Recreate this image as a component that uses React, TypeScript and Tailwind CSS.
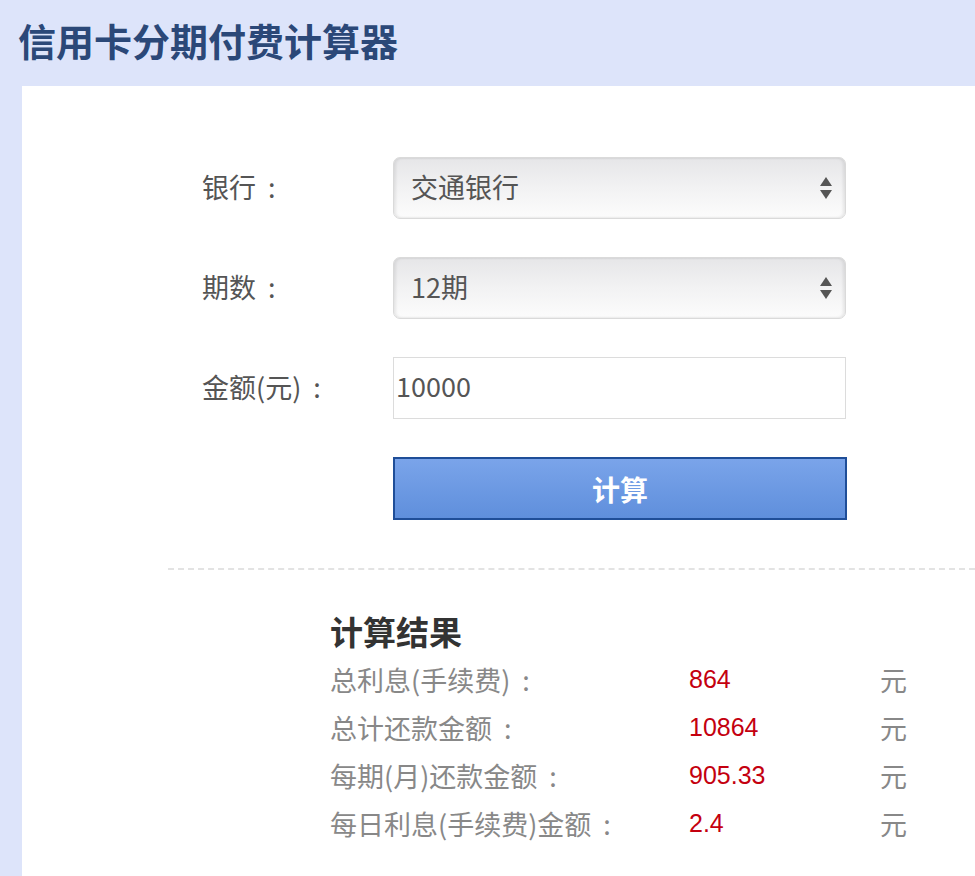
import React from 'react'

const font = { fontFamily: '"Liberation Sans", "Noto Sans CJK SC", sans-serif' }
const cjk = { fontFamily: '"Noto Sans CJK SC", "Liberation Sans", sans-serif' }

const results = [
  { label: '总利息(手续费)', value: '864' },
  { label: '总计还款金额', value: '10864' },
  { label: '每期(月)还款金额', value: '905.33' },
  { label: '每日利息(手续费)金额', value: '2.4' },
]

function Arrows() {
  return (
    <svg width="14" height="26" viewBox="0 0 14 26" className="shrink-0">
      <path d="M7 2 L13 11 L1 11 Z" fill="#555" />
      <path d="M1 15 L13 15 L7 24 Z" fill="#555" />
    </svg>
  )
}

function FakeSelect({ value }: { value: string }) {
  return (
    <div className="w-[453px] h-[62px] flex items-center justify-between pl-[17px] pr-[12px] rounded-[7px] border border-[#dadada] bg-gradient-to-b from-[#e6e6e8] via-[#f2f2f3] to-[#fcfcfc] shadow-[inset_2px_0_3px_rgba(0,0,0,0.08),inset_-2px_0_3px_rgba(0,0,0,0.08)]">
      <span className="text-[27px] text-[#555] leading-[36px] -mt-[3px]" style={cjk}>{value}</span>
      <Arrows />
    </div>
  )
}

function Row({ label, children }: { label: string; children: React.ReactNode }) {
  return (
    <div className="flex items-center">
      <div className="w-[191px] text-[27px] text-[#555] -mt-[2px]" style={cjk}>
        {label}
        {label && <span className="ml-[12px]">:</span>}
      </div>
      {children}
    </div>
  )
}

export default function App() {
  return (
    <div className="min-h-[876px] bg-[#dde4fa] flex flex-col" style={font}>
      <div className="h-[86px] flex items-center pl-[18px] pb-[8px]">
        <h1 className="text-[38px] font-bold text-[#2b4878]" style={cjk}>信用卡分期付费计算器</h1>
      </div>
      <div className="ml-[22px] flex-1 bg-white pt-[71px]">
        <div className="pl-[180px] flex flex-col gap-[38px]">
          <Row label="银行">
            <FakeSelect value="交通银行" />
          </Row>
          <Row label="期数">
            <FakeSelect value="12期" />
          </Row>
          <Row label="金额(元)">
            <div className="w-[453px] h-[62px] flex items-center pl-[2px] border border-[#dcdcdc] bg-white">
              <span className="text-[27px] text-[#555] -mt-[3px]" style={cjk}>10000</span>
            </div>
          </Row>
          <Row label="">
            <button className="w-[454px] h-[63px] border-2 border-[#1f4e98] bg-gradient-to-b from-[#7aa4ea] to-[#5f8fdc] text-white text-[28px] font-bold" style={cjk}>
              计算
            </button>
          </Row>
        </div>
        <div className="ml-[146px] mt-[48px] border-t-2 border-dashed border-[#e3e3e3]" />
        <div className="pl-[308px] pt-[40px]">
          <h2 className="text-[33px] font-bold text-[#333] leading-[42px] mb-[4px]" style={cjk}>计算结果</h2>
          <div className="flex flex-col">
            {results.map((r) => (
              <div key={r.label} className="flex items-center h-[48px]">
                <div className="w-[359px] text-[27px] text-[#888]" style={cjk}>
                  {r.label}
                  <span className="ml-[12px]">:</span>
                </div>
                <div className="w-[191px] text-[25px] text-[#c4000f]">{r.value}</div>
                <div className="text-[27px] text-[#888]" style={cjk}>元</div>
              </div>
            ))}
          </div>
        </div>
      </div>
    </div>
  )
}
